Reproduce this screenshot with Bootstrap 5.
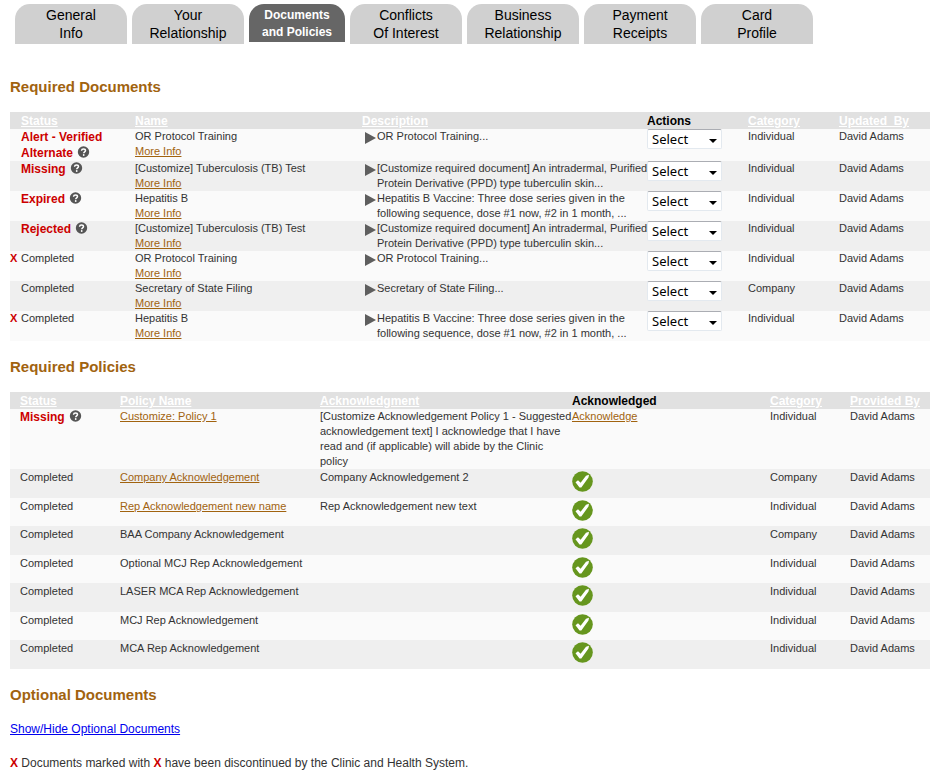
<!DOCTYPE html>
<html lang="en">
<head>
<meta charset="utf-8">
<meta name="viewport" content="width=device-width, initial-scale=1">
<title>Documents and Policies</title>
<link href="https://cdn.jsdelivr.net/npm/bootstrap@5.3.0/dist/css/bootstrap.min.css" rel="stylesheet">
<style>
body{font-family:"Liberation Sans",Arial,sans-serif;font-size:11px;line-height:15px;color:#333;background:#fff}
.page-wrap{padding:4px 15px 0 10px}
.tabs{gap:5px;padding-left:5px;margin-bottom:34px}
.tabs .nav-link{width:112px;height:40px;padding:2px 0;border-radius:15px 15px 0 0;background:#d0d0d0;color:#000;font-size:14px;line-height:18px;text-align:center}
.tabs .nav-link.active{width:96px;height:38px;padding-top:3px;background:#666;color:#fff;font-size:12px;line-height:17px;font-weight:700}
.section-title{font-size:15px;line-height:18px;font-weight:700;color:#a1630f;margin:0 0 16px}
.grid{width:100%;table-layout:fixed;border-collapse:collapse;margin-bottom:17px}
.grid th,.grid td{padding:0;vertical-align:top}
.grid thead th{padding-top:1px;background:#e1e1e1;font-size:12px;line-height:16px;color:#000;white-space:nowrap}
.grid thead a{color:#fff}
.grid tbody tr:nth-child(odd){background:#fafafa}
.grid tbody tr:nth-child(even){background:#efefef}
.docs td{height:30px}
.grid td a{color:#a1630f}
.policies td{height:28px;white-space:nowrap}
.policies tr:nth-child(even) td{height:29px}
.policies tr + tr td{padding-top:1px}
.policies .tick{margin-top:1px}
.grid .inset{padding-left:10px}
.red{color:#c00;font-weight:700}
.grid .alert-name{color:#c00;font-weight:700;font-size:12px;line-height:16px;white-space:nowrap}
.help{width:14px;height:16px;vertical-align:top}
.arrow{width:11px;height:12px;margin:3px 1px 0 3px;flex:none}
.tick{display:block;width:22px;height:22px}
.pick{appearance:none;display:block;width:75px;height:20px;padding:0 0 0 4px;border:1px solid #e3e9ef;border-top-color:#abadb3;border-radius:2px;font:13px/18px "Noto Sans",sans-serif;color:#000;background:#fff url("data:image/svg+xml,%3Csvg xmlns='http://www.w3.org/2000/svg' width='8' height='4'%3E%3Cpath d='M0 0h8L4 4z'/%3E%3C/svg%3E") no-repeat right 4px top 9px}
.toggle-link{color:#00e}
.note{font-size:12px;padding-top:2px;margin-bottom:17px}
</style>
</head>
<body>
<svg class="d-none" aria-hidden="true">
<symbol id="help" viewBox="0 0 14 16"><circle cx="7.500" cy="7" r="5.700" fill="#555"/><path d="M5.500 5.700C5.600 4.400 6.500 3.900 7.500 3.900c1.200 0 2 .7 2 1.700C9.500 6.900 7.800 6.900 7.700 8.200" fill="none" stroke="#fff" stroke-width="1.500"/><circle cx="7.700" cy="10" r=".9" fill="#fff"/></symbol>
<symbol id="arrow" viewBox="0 0 11 12"><path d="M0 0L11 6L0 12z" fill="#5e5e5e"/></symbol>
<symbol id="tick" viewBox="0 0 22 22"><circle cx="10.500" cy="10.500" r="10.300" fill="#66961e"/><path d="M3.500 11.300L6 9.300L8.600 11.800L14 4.700L17 3.800L16.500 6.500L9.300 16.500L7.500 16.500z" fill="#fff"/></symbol>
</svg>
<div class="page-wrap container-fluid">
<nav class="tabs nav align-items-start" aria-label="Sections">
<a class="nav-link" href="#">General<br>Info</a>
<a class="nav-link" href="#">Your<br>Relationship</a>
<a class="nav-link active" aria-current="page" href="#">Documents<br>and Policies</a>
<a class="nav-link" href="#">Conflicts<br>Of Interest</a>
<a class="nav-link" href="#">Business<br>Relationship</a>
<a class="nav-link" href="#">Payment<br>Receipts</a>
<a class="nav-link" href="#">Card<br>Profile</a>
</nav>
<main>
<h2 class="section-title">Required Documents</h2>
<table class="grid docs">
<colgroup><col style="width:11px"><col style="width:114px"><col style="width:227px"><col><col style="width:101px"><col style="width:91px"><col style="width:91px"></colgroup>
<thead><tr><th></th><th><a href="#">Status</a></th><th><a href="#">Name</a></th><th><a href="#">Description</a></th><th>Actions</th><th><a href="#">Category</a></th><th><a href="#">Updated&nbsp; By</a></th></tr></thead>
<tbody>
<tr><td></td><td class="alert-name">Alert - Verified<br>Alternate <svg class="help"><use href="#help"/></svg></td><td>OR Protocol Training<br><a href="#">More Info</a></td><td><div class="d-flex"><svg class="arrow"><use href="#arrow"/></svg><span>OR Protocol Training...</span></div></td><td><select class="pick" aria-label="Action 1"><option>Select</option></select></td><td>Individual</td><td>David Adams</td></tr>
<tr><td></td><td class="alert-name">Missing <svg class="help"><use href="#help"/></svg></td><td>[Customize] Tuberculosis (TB) Test<br><a href="#">More Info</a></td><td><div class="d-flex text-nowrap"><svg class="arrow"><use href="#arrow"/></svg><span>[Customize required document] An intradermal, Purified<br>Protein Derivative (PPD) type tuberculin skin...</span></div></td><td><select class="pick" aria-label="Action 2"><option>Select</option></select></td><td>Individual</td><td>David Adams</td></tr>
<tr><td></td><td class="alert-name">Expired <svg class="help"><use href="#help"/></svg></td><td>Hepatitis B<br><a href="#">More Info</a></td><td><div class="d-flex"><svg class="arrow"><use href="#arrow"/></svg><span>Hepatitis B Vaccine: Three dose series given in the<br>following sequence, dose #1 now, #2 in 1 month, ...</span></div></td><td><select class="pick" aria-label="Action 3"><option>Select</option></select></td><td>Individual</td><td>David Adams</td></tr>
<tr><td></td><td class="alert-name">Rejected <svg class="help"><use href="#help"/></svg></td><td>[Customize] Tuberculosis (TB) Test<br><a href="#">More Info</a></td><td><div class="d-flex text-nowrap"><svg class="arrow"><use href="#arrow"/></svg><span>[Customize required document] An intradermal, Purified<br>Protein Derivative (PPD) type tuberculin skin...</span></div></td><td><select class="pick" aria-label="Action 4"><option>Select</option></select></td><td>Individual</td><td>David Adams</td></tr>
<tr><td class="red">X</td><td>Completed</td><td>OR Protocol Training<br><a href="#">More Info</a></td><td><div class="d-flex"><svg class="arrow"><use href="#arrow"/></svg><span>OR Protocol Training...</span></div></td><td><select class="pick" aria-label="Action 5"><option>Select</option></select></td><td>Individual</td><td>David Adams</td></tr>
<tr><td></td><td>Completed</td><td>Secretary of State Filing<br><a href="#">More Info</a></td><td><div class="d-flex"><svg class="arrow"><use href="#arrow"/></svg><span>Secretary of State Filing...</span></div></td><td><select class="pick" aria-label="Action 6"><option>Select</option></select></td><td>Company</td><td>David Adams</td></tr>
<tr><td class="red">X</td><td>Completed</td><td>Hepatitis B<br><a href="#">More Info</a></td><td><div class="d-flex"><svg class="arrow"><use href="#arrow"/></svg><span>Hepatitis B Vaccine: Three dose series given in the<br>following sequence, dose #1 now, #2 in 1 month, ...</span></div></td><td><select class="pick" aria-label="Action 7"><option>Select</option></select></td><td>Individual</td><td>David Adams</td></tr>
</tbody>
</table>
<h2 class="section-title">Required Policies</h2>
<table class="grid policies">
<colgroup><col style="width:110px"><col style="width:200px"><col><col style="width:198px"><col style="width:80px"><col style="width:80px"></colgroup>
<thead><tr><th class="inset"><a href="#">Status</a></th><th><a href="#">Policy Name</a></th><th><a href="#">Acknowledgment</a></th><th>Acknowledged</th><th><a href="#">Category</a></th><th><a href="#">Provided By</a></th></tr></thead>
<tbody>
<tr><td class="inset alert-name">Missing <svg class="help"><use href="#help"/></svg></td><td><a href="#">Customize: Policy 1</a></td><td>[Customize Acknowledgement Policy 1 - Suggested<br>acknowledgement text] I acknowledge that I have<br>read and (if applicable) will abide by the Clinic<br>policy</td><td><a href="#">Acknowledge</a></td><td>Individual</td><td>David Adams</td></tr>
<tr><td class="inset">Completed</td><td><a href="#">Company Acknowledgement</a></td><td>Company Acknowledgement 2</td><td><svg class="tick" role="img" aria-label="Yes"><use href="#tick"/></svg></td><td>Company</td><td>David Adams</td></tr>
<tr><td class="inset">Completed</td><td><a href="#">Rep Acknowledgement new name</a></td><td>Rep Acknowledgement new text</td><td><svg class="tick" role="img" aria-label="Yes"><use href="#tick"/></svg></td><td>Individual</td><td>David Adams</td></tr>
<tr><td class="inset">Completed</td><td>BAA Company Acknowledgement</td><td></td><td><svg class="tick" role="img" aria-label="Yes"><use href="#tick"/></svg></td><td>Company</td><td>David Adams</td></tr>
<tr><td class="inset">Completed</td><td>Optional MCJ Rep Acknowledgement</td><td></td><td><svg class="tick" role="img" aria-label="Yes"><use href="#tick"/></svg></td><td>Individual</td><td>David Adams</td></tr>
<tr><td class="inset">Completed</td><td>LASER MCA Rep Acknowledgement</td><td></td><td><svg class="tick" role="img" aria-label="Yes"><use href="#tick"/></svg></td><td>Individual</td><td>David Adams</td></tr>
<tr><td class="inset">Completed</td><td>MCJ Rep Acknowledgement</td><td></td><td><svg class="tick" role="img" aria-label="Yes"><use href="#tick"/></svg></td><td>Individual</td><td>David Adams</td></tr>
<tr><td class="inset">Completed</td><td>MCA Rep Acknowledgement</td><td></td><td><svg class="tick" role="img" aria-label="Yes"><use href="#tick"/></svg></td><td>Individual</td><td>David Adams</td></tr>
</tbody>
</table>
<h2 class="section-title">Optional Documents</h2>
<p class="note"><a class="toggle-link" href="#">Show/Hide Optional Documents</a></p>
<p class="note mb-0"><b class="red">X</b> Documents marked with <b class="red">X</b> have been discontinued by the Clinic and Health System.</p>
</main>
</div>
<script src="https://cdn.jsdelivr.net/npm/bootstrap@5.3.0/dist/js/bootstrap.bundle.min.js"></script>
</body>
</html>
